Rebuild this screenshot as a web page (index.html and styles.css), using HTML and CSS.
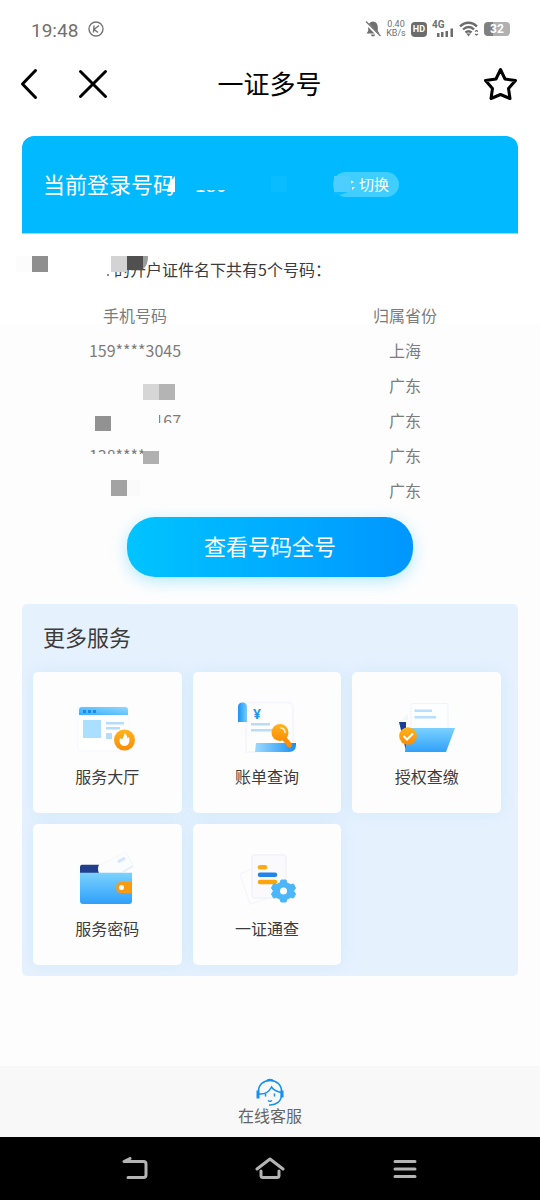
FILE: index.html
```html
<!DOCTYPE html>
<html lang="zh-CN">
<head>
    <meta charset="UTF-8">
    <meta name="viewport" content="width=device-width, initial-scale=1.0">
    <title>一证多号</title>
    <link rel="stylesheet" href="styles.css">
</head>
<body>
    <div class="status-bar">
        <span class="time">19:48</span>
        <svg class="k-icon" width="16" height="16" viewBox="0 0 16 16" fill="none" stroke="#757575" stroke-width="1.4">
            <circle cx="8" cy="8" r="7"/>
            <path d="M6 4.5 5.4 11.5M11 4.5 6 8.4 10 11.5"/>
        </svg>
        <div class="status-right">
            <svg width="16" height="18" viewBox="0 0 16 18">
                <path d="M8 1.5c-3.2.4-4.8 2.6-4.8 5.6v4L1.5 13.5h13l-1.7-2.4v-4C12.8 4 11.2 1.9 8 1.5zM6 14.5h4a2 2 0 0 1-4 0z" fill="#707070"/>
                <path d="M0 1.5 14.5 16.5" stroke="#fff" stroke-width="3"/>
                <path d="M1 1.5 15.5 16" stroke="#707070" stroke-width="1.3"/>
            </svg>
            <span class="speed">0.40<br>KB/s</span>
            <span class="hd">HD</span>
            <span class="signal">
                <span class="net">4G</span>
                <svg width="22" height="18" viewBox="0 0 22 18" fill="#6c6c6c">
                    <path d="M5 13h2.5v4H5zM9 12h2.5v5H9zM13.5 11H16v6h-2.500zM18.5 8.5H21V17h-2.500z"/>
                </svg>
            </span>
            <svg width="20" height="16" viewBox="0 0 20 16" fill="none" stroke="#6c6c6c" stroke-width="2.4">
                <path d="M1 5.5c5-5 12-5 17 0M4 8.5c3.500-3.300 8-3.300 11 0M6.500 11.500c2-1.800 4-1.800 6 0"/>
                <path d="M8.500 13h2L9.500 14.500zM16 10.500l1.500-1 1.500 1M16 13l1.500 1 1.500-1" stroke-width="1.2"/>
            </svg>
            <span class="battery">32</span>
        </div>
    </div>

    <header class="header">
        <div class="header-left">
            <button aria-label="返回">
                <svg width="18" height="32" viewBox="0 0 18 32"><path d="M15.5 2.500 2.500 16l13 13.500"/></svg>
            </button>
            <button aria-label="关闭">
                <svg width="32" height="32" viewBox="0 0 32 32"><path d="M3.500 3.500l25 25M28.500 3.500l-25 25"/></svg>
            </button>
        </div>
        <h1>一证多号</h1>
        <button class="favorite" aria-label="收藏">
            <svg width="36" height="36" viewBox="0 0 36 36"><path d="M17.500 3.500 22 13 32.500 14.500 25.500 22.500 27 32.500 17.500 28.500 8 32.500 9.500 22.500 2.500 14.500 13 13z"/></svg>
        </button>
    </header>

    <section class="banner">
        <span class="banner-label">当前登录号码</span>
        <span class="banner-phone">180</span>
        <button class="switch">切换</button>
        <svg class="mosaic" width="496" height="97" viewBox="0 0 496 97">
            <rect x="172" y="30" width="100" height="24" fill="#00b9ff"/>
            <path d="M153 40v16h-8l2-9z" fill="#fff"/>
            <rect x="249" y="40" width="16" height="16" fill="#08bcff"/>
            <rect x="312" y="40" width="16" height="16" fill="#4dceff"/>
            <path d="M312 56h14l-8 3h-6z" fill="#0bbcff"/>
            <path d="M329 44.500l3 1.500-3 1.500zM330 51h3l-3 3z" fill="#fff"/>
        </svg>
    </section>

    <p class="notice">
        的开户证件名下共有5个号码：
        <svg class="mosaic" width="160" height="44" viewBox="0 0 160 44">
            <rect x="96" y="16" width="50" height="8" fill="#fff"/>
            <rect x="16" y="16" width="16" height="16" fill="#fcfcfc"/>
            <rect x="32" y="16" width="16" height="16" fill="#8f8f8f"/>
            <path d="M143 16h5c0 7-2 11-5 13z" fill="#9c9c9c"/>
            <rect x="111" y="16" width="16" height="16" fill="#d3d3d3"/>
            <rect x="127" y="16" width="16" height="14" fill="#505050"/>
            <circle cx="108" cy="35" r="1" fill="#666"/>
        </svg>
    </p>

    <main>
        <table class="numbers">
            <thead>
                <tr><th>手机号码</th><th>归属省份</th></tr>
            </thead>
            <tbody>
                <tr><td>159****3045</td><td>上海</td></tr>
                <tr>
                    <td>
                        <svg class="cover" width="110" height="35" viewBox="80 0 110 35">
                            <rect x="143" y="16" width="16" height="16" fill="#d6d6d6"/>
                            <rect x="159" y="16" width="16" height="16" fill="#b4b4b4"/>
                        </svg>
                    </td>
                    <td>广东</td>
                </tr>
                <tr>
                    <td>
                        134****2167
                        <svg class="cover" width="110" height="35" viewBox="80 0 110 35">
                            <path d="M80 0h79v20h31v15H80z" fill="#fdfdfd"/>
                            <rect x="95" y="13" width="16" height="15" fill="#929292"/>
                        </svg>
                    </td>
                    <td>广东</td>
                </tr>
                <tr>
                    <td>
                        138****1575
                        <svg class="cover" width="110" height="35" viewBox="80 0 110 35">
                            <path d="M80 16h63V0h47v35H80z" fill="#fdfdfd"/>
                            <rect x="143" y="13" width="16" height="13" fill="#b0b0b0"/>
                        </svg>
                    </td>
                    <td>广东</td>
                </tr>
                <tr>
                    <td>
                        <svg class="cover" width="110" height="35" viewBox="80 0 110 35">
                            <rect x="111" y="7" width="16" height="16" fill="#a3a3a3"/>
                            <rect x="127" y="7" width="14" height="16" fill="#fafafa"/>
                        </svg>
                    </td>
                    <td>广东</td>
                </tr>
            </tbody>
        </table>

        <button class="view-all">查看号码全号</button>

        <section class="services">
            <h2>更多服务</h2>
            <div class="grid">
                <a class="card" href="#">
                    <svg width="72" height="60" viewBox="0 0 72 60">
                        <defs>
                            <linearGradient id="bar" x1="0" y1="1" x2="1" y2="0"><stop offset="0" stop-color="#35aefb"/><stop offset="1" stop-color="#93d8ff"/></linearGradient>
                            <linearGradient id="orange" x1="0" y1="0" x2="0" y2="1"><stop offset="0" stop-color="#ffb41f"/><stop offset="1" stop-color="#fb8c04"/></linearGradient>
                            <linearGradient id="sky" x1="0" y1="0" x2="0" y2="1"><stop offset="0" stop-color="#7bd2fd"/><stop offset="1" stop-color="#2fa0fb"/></linearGradient>
                        </defs>
                        <rect x="7" y="10" width="51" height="44" rx="3" fill="#fff" stroke="#f3f7fd"/>
                        <path d="M8 18v-5q0-3 3-3h43q3 0 3 3v5z" fill="url(#bar)"/>
                        <path d="M12 13h3v3h-3zM17 13h3v3h-3zM22 13h3v3h-3z" fill="#168bea"/>
                        <rect x="12" y="23" width="18" height="18" fill="#aadfff"/>
                        <path d="M35 25h18v2.500H35zM35 30h14v2.500H35zM35 36h6v6h-6z" fill="#b5dcfb"/>
                        <circle cx="53.500" cy="43" r="10.500" fill="url(#orange)"/>
                        <path d="M53.500 36c2.500 2 3 3.800 2.800 5.600l1.700-1.500c1.500 4.900-.5 9-4.500 9s-6-4.100-4.500-8l2 1.500c1-2.600 2.500-4 2.500-6.600z" fill="#fff"/>
                    </svg>
                    <span>服务大厅</span>
                </a>
                <a class="card" href="#">
                    <svg width="72" height="60" viewBox="0 0 72 60">
                        <defs>
                            <linearGradient id="fold"><stop offset="0" stop-color="#1695f4"/><stop offset="1" stop-color="#79cafb"/></linearGradient>
                            <linearGradient id="roll"><stop offset="0" stop-color="#9bd9ff"/><stop offset="1" stop-color="#1990f2"/></linearGradient>
                        </defs>
                        <path d="M11 5.500h46q5 0 5 5V47M15 14v41h10" fill="none" stroke="#f6f7fe" stroke-width="2"/>
                        <path d="M7 25V10q0-4.500 4.500-4.500T16 10v15z" fill="url(#fold)"/>
                        <text class="yen" x="22" y="22">¥</text>
                        <path d="M20 26h19v2.500H20zM20 32h22v2.500H20z" fill="#b9dcfa"/>
                        <path d="M25 46h40v2q0 7-7 7H24z" fill="url(#roll)"/>
                        <path d="M53 41l5.500 7" stroke="#f99008" stroke-width="5" stroke-linecap="round"/>
                        <circle cx="49" cy="35.500" r="8.500" fill="url(#orange)"/>
                        <path d="M50 31q4 .5 4 4.500" fill="none" stroke="#fff1c9" stroke-width="1.500" stroke-linecap="round"/>
                    </svg>
                    <span>账单查询</span>
                </a>
                <a class="card" href="#">
                    <svg width="72" height="60" viewBox="0 0 72 60">
                        <path d="M17 17l-6 6h6z" fill="#f3f5fd"/>
                        <rect x="20" y="6.500" width="37" height="40" rx="2" fill="#fdfeff" stroke="#ecf4fd"/>
                        <path d="M23.500 12.500H41V15H23.500zM23.500 19H45v2.500H23.500z" fill="#b9defb"/>
                        <path d="M8 25h7v7h4l-4 22z" fill="#1c3f91"/>
                        <path d="M17 31h47l-9 24H14z" fill="url(#sky)"/>
                        <circle cx="17" cy="39" r="8.800" fill="url(#orange)"/>
                        <path d="M12.500 39l3.500 3.500 6-6" fill="none" stroke="#fff" stroke-width="2"/>
                    </svg>
                    <span>授权查缴</span>
                </a>
                <a class="card" href="#">
                    <svg width="72" height="60" viewBox="0 0 72 60">
                        <path d="M27 17 55 3l7 13-12 8H27z" fill="#fbfcfe" stroke="#f5f7fc"/>
                        <path d="M47 13l7-4" stroke="#d4e4fa" stroke-width="3"/>
                        <path d="M52 23l10-6" stroke="#e6eefb" stroke-width="2"/>
                        <path d="M9 24v-6q0-2.300 2-2.300h17q-2 4 0 8.300z" fill="#213f8c"/>
                        <path d="M9 23.700h52V52q0 3-3 3H12q-3 0-3-3z" fill="url(#sky)"/>
                        <path d="M61 33H50q-5 0-5 5.500t5 5.500h11z" fill="#f79a14"/>
                        <circle cx="50.500" cy="38.500" r="2.500" fill="#fff"/>
                    </svg>
                    <span>服务密码</span>
                </a>
                <a class="card" href="#">
                    <svg width="72" height="60" viewBox="0 0 72 60">
                        <path d="M21 20 9 25l10 30 20-6" fill="none" stroke="#f6f7fb" stroke-width="1.500"/>
                        <rect x="21" y="6" width="34" height="43" rx="3" fill="#fafafc" stroke="#f4f5fb" stroke-width="2"/>
                        <g stroke-width="4.500" stroke-linecap="round">
                            <path d="M29 18.300h5" stroke="#fdaa16"/>
                            <path d="M29 25.700h15" stroke="#2184ea"/>
                            <path d="M29 33h15" stroke="#fda50a"/>
                        </g>
                        <path d="M50 31h5l1 3 3.500 1.500 3-.5 2 4-2 3 2 3-2 4-3-.5L56 50l-1 3h-5l-1-3-3.500-1.500-3 .5-2-4 2-3-2-3 2-4 3 .5L49 34z" fill="#4bb7f8" stroke="#4bb7f8" stroke-linejoin="round"/>
                        <circle cx="52.500" cy="42" r="3.500" fill="#fff"/>
                    </svg>
                    <span>一证通查</span>
                </a>
            </div>
        </section>
    </main>

    <footer>
        <a class="support" href="#">
            <svg width="30" height="29" viewBox="0 0 30 29" fill="none" stroke="#1490f0" stroke-width="1.500">
                <path d="M3.500 13C3.500 6.500 8.500 2.500 15 2.500S26.500 6.500 26.500 13v4c0 6-5 10.500-12.500 10"/>
                <path d="M11.500 3c1-2 6-2 7 0M4 16c6 .5 10-2 12.500-7 2 3 5 4.500 9.500 5.500"/>
                <path d="M3 12.500v8M27 12.500v7" stroke-width="3"/>
                <path d="M10.500 15.500v3M19.500 15.500v3M13 22.500q2 1.500 4 0"/>
            </svg>
            <span>在线客服</span>
        </a>
        <nav class="system-nav">
            <button aria-label="后退">
                <svg width="28" height="24" viewBox="0 0 28 24"><path d="M9 1.500 3 4.500h19.500q2.500 0 2.500 2.500v11q0 2.500-2.500 2.500H7"/></svg>
            </button>
            <button aria-label="主页">
                <svg width="30" height="24" viewBox="0 0 30 24"><path d="M2 12 15 2l13 10M6 14v4.500q0 2 2 2h14q2 0 2-2V14"/></svg>
            </button>
            <button aria-label="最近任务">
                <svg width="26" height="24" viewBox="0 0 26 24"><path d="M3 4.500h20M3 12h20M3 19.500h20"/></svg>
            </button>
        </nav>
    </footer>
</body>
</html>
```
FILE: styles.css
```css
* {
    box-sizing: border-box;
}

body {
    display: flex;
    flex-direction: column;
    min-height: 100vh;
    margin: 0;
    font-family: "Noto Sans CJK SC", sans-serif;
    font-size: 16px;
    background-color: #fff;
    color: #3c3c3c;
}

button {
    padding: 0;
    border: none;
    background: none;
    font-family: inherit;
    cursor: pointer;
}

svg {
    display: block;
}

a {
    color: inherit;
    text-decoration: none;
}

/* phone status bar */
.status-bar {
    display: flex;
    align-items: center;
    height: 58px;
    padding: 0 30px 0 31px;
    color: #707070;
    font-family: Roboto, sans-serif;
}

.time {
    padding-top: 2px;
    font-size: 19px;
}

.k-icon {
    margin-left: 10px;
}

.status-right {
    display: flex;
    align-items: center;
    gap: 5px;
    margin-left: auto;
}

.speed {
    font-size: 9px;
    line-height: 9px;
    text-align: center;
}

.hd {
    padding: 0 2px;
    border-radius: 4px;
    background-color: #6c6c6c;
    color: #fff;
    font-size: 9px;
    font-weight: bold;
    line-height: 15px;
}

.signal {
    position: relative;
}

.net {
    position: absolute;
    top: 0;
    left: 0;
    font-size: 10px;
    font-weight: bold;
    line-height: 9px;
}

.battery {
    width: 26px;
    border-radius: 4px;
    background: linear-gradient(to right, #808080 35%, #b0b0b0 35%);
    color: #fff;
    font-size: 12px;
    font-weight: bold;
    line-height: 14px;
    text-align: center;
}

/* title bar */
.header {
    display: grid;
    grid-template-columns: 1fr auto 1fr;
    align-items: center;
    height: 52px;
    padding: 0 21px 0 20px;
}

.header svg {
    fill: none;
    stroke: #000;
    stroke-width: 3;
    stroke-linecap: round;
    stroke-linejoin: round;
}

.header-left {
    display: flex;
    gap: 39px;
}

.header h1 {
    margin: 0;
    padding-bottom: 2px;
    color: #000;
    font-size: 26px;
    font-weight: normal;
    line-height: 36px;
}

.favorite {
    justify-self: end;
}

/* current number */
.banner {
    position: relative;
    display: flex;
    align-items: center;
    height: 98px;
    margin: 26px 22px 0;
    padding: 0 21px;
    border-bottom: 1px solid #8fdfff;
    border-radius: 12px 12px 0 0;
    background-color: #00b9ff;
    color: #fff;
}

.banner-label {
    padding-bottom: 4px;
    font-size: 22px;
    line-height: 30px;
}

.banner-phone {
    width: 138px;
    margin-left: 20px;
    padding-bottom: 2px;
    font-size: 19px;
    line-height: 30px;
}

.switch {
    width: 66px;
    padding: 0 10px 2px 0;
    border-radius: 13px;
    background-color: #40ceff;
    color: #fff;
    font-size: 15px;
    line-height: 23px;
    text-align: right;
}

.mosaic {
    position: absolute;
    top: 0;
    left: 0;
}

.notice {
    position: relative;
    margin: 6px 0 0;
    padding: 14px 20px 14px 114px;
    line-height: 30px;
}

main {
    flex: 1;
    background: linear-gradient(#fff 26px, #fdfdfd 26px);
}

.numbers {
    width: 100%;
    border-collapse: collapse;
    table-layout: fixed;
    color: #7c7c7c;
}

.numbers th,
.numbers td {
    position: relative;
    height: 35px;
    padding: 0 0 2px;
    font-weight: normal;
    line-height: 24px;
    text-align: center;
}

.cover {
    position: absolute;
    top: 0;
    left: calc(50% - 55px);
}

.view-all {
    display: block;
    width: 53%;
    height: 60px;
    margin: 9px auto 27px;
    padding-bottom: 4px;
    border-radius: 28px;
    background: linear-gradient(to right, #00c4ff, #0096ff);
    box-shadow: 0 4px 16px rgba(0, 190, 255, 0.3);
    color: #fff;
    font-size: 22px;
}

/* services */
.services {
    margin: 0 22px 24px;
    padding: 0 17px 11px 11px;
    border-radius: 5px;
    background-color: #e6f1fe;
    overflow: hidden;
}

.services h2 {
    margin: 0;
    padding: 0 10px 4px;
    font-size: 22px;
    font-weight: normal;
    line-height: 64px;
}

.grid {
    display: grid;
    grid-template-columns: repeat(3, 1fr);
    gap: 11px;
}

.card {
    display: flex;
    flex-direction: column;
    align-items: center;
    gap: 7px;
    padding: 25px 0;
    border-radius: 5px;
    background-color: #fdfdfd;
    box-shadow: 0 0 16px rgba(180, 225, 245, 0.4);
    line-height: 24px;
}

.yen {
    fill: #1b98ee;
    font-family: "Noto Sans", sans-serif;
    font-size: 14px;
    font-weight: bold;
}

/* bottom */
.support {
    display: flex;
    flex-direction: column;
    align-items: center;
    padding: 12px 0 14px;
    background-color: #f8f8f8;
    color: #666;
    line-height: 16px;
}

.system-nav {
    display: flex;
    justify-content: center;
    height: 63px;
    background-color: #000;
}

.system-nav button {
    display: flex;
    flex: 0 0 25%;
    align-items: center;
    justify-content: center;
}

.system-nav svg {
    fill: none;
    stroke: #b4b4b4;
    stroke-width: 3;
    stroke-linecap: round;
    stroke-linejoin: round;
}
```
